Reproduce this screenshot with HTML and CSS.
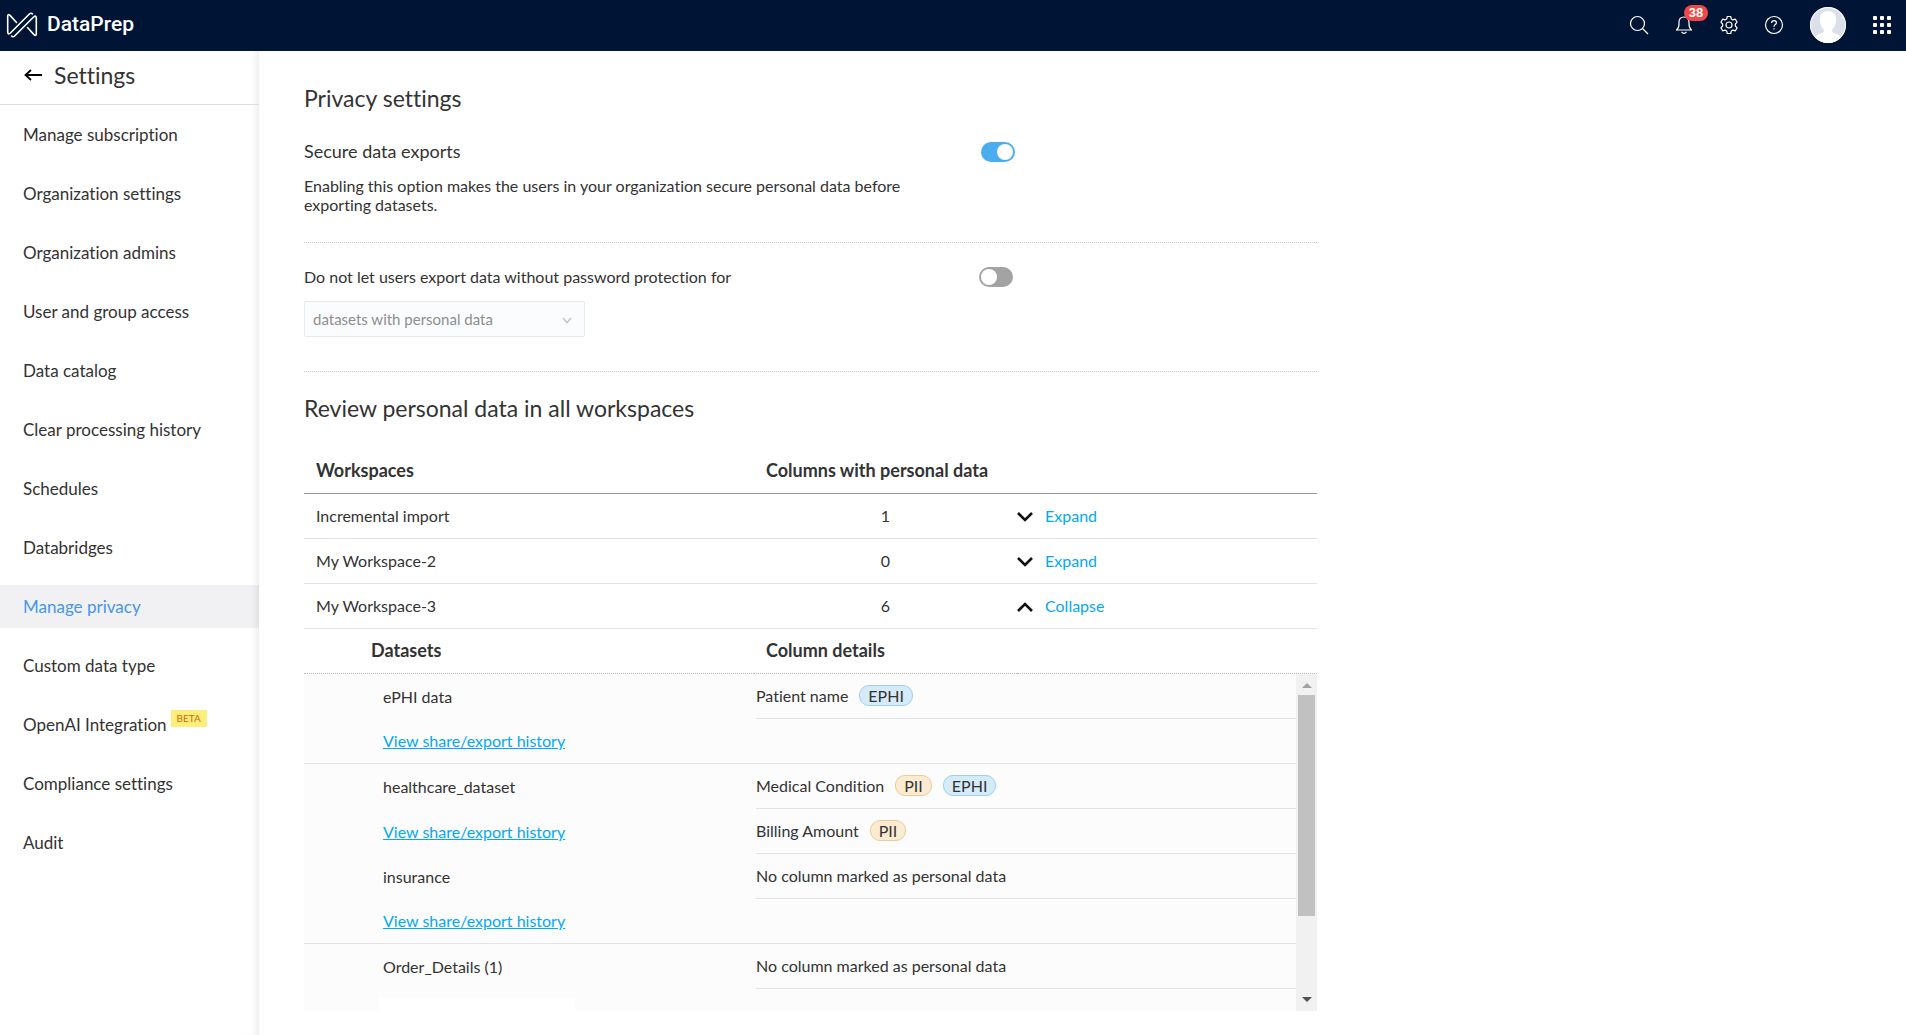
FILE: index.html
```html
<!DOCTYPE html>
<html lang="en">

<head>
	<title>DataPrep - Privacy settings</title>
	<meta charset="utf-8">
	<meta name="viewport" content="width=device-width, initial-scale=1.0">
	<link rel="stylesheet" href="styles.css">
</head>

<body>
	<header class="topbar">
		<a class="brand" href="#">
			<svg class="logo" viewBox="0 0 32 28" fill="none" stroke="#fff" stroke-width="1.6" stroke-linecap="round" stroke-linejoin="round">
				<path d="M10.5 11.5 L4 4.4 Q1.7 2.5 1.7 5.2 V21 Q1.8 24.2 4.4 22 L23.4 3 Q25.2 1.5 26.4 3"/>
				<path d="M21.5 16.5 L28 23.6 Q30.3 25.5 30.3 22.8 V7 Q30.2 3.8 27.6 6 L8.6 25 Q6.8 26.5 5.6 25"/>
			</svg>
			<span>DataPrep</span>
		</a>
		<div class="tools">
			<button class="tool" type="button" aria-label="Search">
				<svg viewBox="0 0 20 20" fill="none" stroke="#fff" stroke-width="1.2"><circle cx="8.5" cy="8.5" r="7"/><path d="M13.5 13.5 L19 19"/></svg>
			</button>
			<button class="tool" type="button" aria-label="Notifications">
				<svg viewBox="0 0 20 20" fill="none" stroke="#fff" stroke-width="1.2" stroke-linejoin="round"><path d="M2.5 15 Q5 13 5 9 V7.5 Q5 2 10 2 Q15 2 15 7.5 V9 Q15 13 17.5 15 Z"/><path d="M7.5 16.8 Q10 20 12.5 16.8"/></svg>
				<span class="count">38</span>
			</button>
			<button class="tool" type="button" aria-label="Settings">
				<svg viewBox="0 0 20 20" fill="none" stroke="#fff" stroke-width="1.2" stroke-linejoin="round"><circle cx="10" cy="10" r="3"/><path d="M8.3 1.5 H11.7 L12.3 3.9 L14 4.9 L16.4 4.2 L18.1 7.2 L16.4 9 V11 L18.1 12.8 L16.4 15.8 L14 15.1 L12.3 16.1 L11.7 18.5 H8.3 L7.7 16.1 L6 15.1 L3.6 15.8 L1.9 12.8 L3.6 11 V9 L1.9 7.2 L3.6 4.2 L6 4.9 L7.7 3.9 Z"/></svg>
			</button>
			<button class="tool" type="button" aria-label="Help">
				<svg viewBox="0 0 20 20" fill="none" stroke="#fff" stroke-width="1.2"><circle cx="10" cy="10" r="8.5"/><path d="M7.6 8 Q7.6 5.7 10 5.7 Q12.4 5.7 12.4 7.8 Q12.4 9 11 9.8 Q10 10.4 10 11.8"/><path d="M10 13.2 V14.6"/></svg>
			</button>
			<button class="avatar" type="button" aria-label="Account">
				<svg viewBox="0 0 36 36"><circle cx="18" cy="18" r="18" fill="#dce0eb"/><path d="M18 4 C23 4 26 7 26 12 C26 18 24 21 22 23 C22 26 24 26 29 28 L31 30.5 A18 18 0 0 1 5 30.5 L7 28 C12 26 14 26 14 23 C12 21 10 18 10 12 C10 7 13 4 18 4 Z" fill="#fff"/><circle cx="18" cy="18" r="17.5" fill="none" stroke="#fff"/></svg>
			</button>
			<button class="apps" type="button" aria-label="All apps">
				<svg viewBox="0 0 18 18" fill="#fff"><rect width="4" height="4" rx="1"/><rect x="7" width="4" height="4" rx="1"/><rect x="14" width="4" height="4" rx="1"/><rect y="7" width="4" height="4" rx="1"/><rect x="7" y="7" width="4" height="4" rx="1"/><rect x="14" y="7" width="4" height="4" rx="1"/><rect y="14" width="4" height="4" rx="1"/><rect x="7" y="14" width="4" height="4" rx="1"/><rect x="14" y="14" width="4" height="4" rx="1"/></svg>
			</button>
		</div>
	</header>

	<div class="page">
		<aside class="sidebar">
			<div class="sidebar-title">
				<a href="#" aria-label="Back">
					<svg viewBox="0 0 18 12" fill="none" stroke="#000" stroke-width="1.8"><path d="M18 6 H1.5 M7 1 L1.5 6 L7 11"/></svg>
				</a>
				<h2>Settings</h2>
			</div>
			<nav class="menu">
				<a href="#">Manage subscription</a>
				<a href="#">Organization settings</a>
				<a href="#">Organization admins</a>
				<a href="#">User and group access</a>
				<a href="#">Data catalog</a>
				<a href="#">Clear processing history</a>
				<a href="#">Schedules</a>
				<a href="#">Databridges</a>
				<a href="#" class="active">Manage privacy</a>
				<a href="#">Custom data type</a>
				<a href="#">OpenAI Integration<span class="beta">BETA</span></a>
				<a href="#">Compliance settings</a>
				<a href="#">Audit</a>
			</nav>
		</aside>

		<main class="content">
			<h1>Privacy settings</h1>

			<section class="setting secure">
				<div class="setting-text">
					<label class="setting-name" for="secureExports">Secure data exports</label>
					<p>Enabling this option makes the users in your organization secure personal data before exporting datasets.</p>
				</div>
				<input class="toggle" type="checkbox" id="secureExports" checked>
			</section>

			<section class="setting password">
				<div class="setting-text">
					<label for="passwordExports">Do not let users export data without password protection for</label>
					<div class="select">
						<select aria-label="Datasets to protect" disabled>
							<option>datasets with personal data</option>
						</select>
						<svg viewBox="0 0 10 7" fill="none" stroke="#c4c6cb" stroke-width="1.6"><path d="M1 1 L5 5.5 L9 1"/></svg>
					</div>
				</div>
				<input class="toggle" type="checkbox" id="passwordExports">
			</section>

			<h1>Review personal data in all workspaces</h1>

			<table class="workspaces">
				<colgroup>
					<col class="col-name">
					<col class="col-count">
					<col>
				</colgroup>
				<thead>
					<tr>
						<th>Workspaces</th>
						<th colspan="2">Columns with personal data</th>
					</tr>
				</thead>
				<tbody>
					<tr>
						<td>Incremental import</td>
						<td class="number">1</td>
						<td class="action"><button type="button"><svg viewBox="0 0 16 12"><path d="M1 3 L8 10 L15 3"/></svg>Expand</button></td>
					</tr>
					<tr>
						<td>My Workspace-2</td>
						<td class="number">0</td>
						<td class="action"><button type="button"><svg viewBox="0 0 16 12"><path d="M1 3 L8 10 L15 3"/></svg>Expand</button></td>
					</tr>
					<tr>
						<td>My Workspace-3</td>
						<td class="number">6</td>
						<td class="action"><button type="button"><svg viewBox="0 0 16 12"><path d="M1 11 L8 4 L15 11"/></svg>Collapse</button></td>
					</tr>
					<tr class="subhead">
						<th>Datasets</th>
						<th colspan="2">Column details</th>
					</tr>
					<tr class="details">
						<td colspan="3">
							<div class="scroller">
								<div class="scroll-area">
									<table class="datasets">
										<tbody class="group">
											<tr>
												<td>ePHI data</td>
												<td><span class="field">Patient name <span class="tag ephi">EPHI</span></span></td>
											</tr>
											<tr>
												<td><a href="#">View share/export history</a></td>
												<td></td>
											</tr>
										</tbody>
										<tbody>
											<tr>
												<td>healthcare_dataset</td>
												<td><span class="field">Medical Condition <span class="tag pii">PII</span><span class="tag ephi">EPHI</span></span></td>
											</tr>
											<tr>
												<td><a href="#">View share/export history</a></td>
												<td><span class="field">Billing Amount <span class="tag pii">PII</span></span></td>
											</tr>
										</tbody>
										<tbody class="group">
											<tr>
												<td>insurance</td>
												<td><span class="field">No column marked as personal data</span></td>
											</tr>
											<tr>
												<td><a href="#">View share/export history</a></td>
												<td></td>
											</tr>
										</tbody>
										<tbody>
											<tr>
												<td>Order_Details (1)</td>
												<td><span class="field">No column marked as personal data</span></td>
											</tr>
											<tr>
												<td><div class="blank"></div></td>
												<td></td>
											</tr>
										</tbody>
									</table>
								</div>
								<div class="scrollbar" aria-hidden="true">
									<svg viewBox="0 0 10 5" fill="#a3a3a3"><path d="M0 5 L5 0 L10 5 Z"/></svg>
									<div class="track"><div class="thumb"></div></div>
									<svg viewBox="0 0 10 5" fill="#505050"><path d="M0 0 L5 5 L10 0 Z"/></svg>
								</div>
							</div>
						</td>
					</tr>
				</tbody>
			</table>
		</main>
	</div>
</body>

</html>
```
FILE: styles.css
```css
*, *:before, *:after {
	box-sizing: border-box;
}

html, body {
	margin: 0;
	padding: 0;
	height: 100%;
}

body {
	display: flex;
	flex-direction: column;
	background: #fff;
	color: #333;
	font-family: Lato, "Liberation Sans", sans-serif;
	font-size: 16px;
	font-variant-ligatures: none;
	line-height: 19px;
}

h1, h2, p {
	margin: 0;
	font-weight: normal;
}

h1, h2 {
	font-size: 23px;
	line-height: 28px;
}

button {
	padding: 0;
	border: 0;
	background: none;
	color: inherit;
	font: inherit;
	cursor: pointer;
}

a {
	color: #03a9f4;
}

svg {
	display: block;
}

/* top bar */

.topbar {
	display: flex;
	align-items: center;
	justify-content: space-between;
	flex: none;
	height: 51px;
	padding: 0 15px 2px 6px;
	background: #001536;
	color: #fff;
}

.brand {
	display: flex;
	align-items: center;
	gap: 9px;
	color: #fff;
	font-family: Roboto, "Liberation Sans", sans-serif;
	font-size: 21px;
	font-weight: 500;
	text-decoration: none;
}

.logo {
	width: 32px;
	height: 28px;
}

.tools {
	display: flex;
	align-items: center;
	gap: 25px;
}

.tool {
	position: relative;
	width: 20px;
	height: 20px;
}

.tool svg {
	width: 20px;
	height: 20px;
}

.count {
	position: absolute;
	top: -10px;
	left: 10px;
	width: 24px;
	height: 16px;
	border-radius: 8px;
	background: #f04848;
	font-family: "Liberation Sans", sans-serif;
	font-size: 13px;
	font-weight: bold;
	line-height: 16px;
}

.avatar {
	margin: 0 2px 0 1px;
}

.avatar svg {
	width: 36px;
	height: 36px;
}

.apps svg {
	width: 18px;
	height: 18px;
}

.page {
	display: flex;
	flex: 1;
	min-height: 0;
}

/* sidebar */

.sidebar {
	flex: none;
	width: 259px;
	box-shadow: inset -8px 0 8px -6px rgba(0, 0, 0, .09);
}

.sidebar-title {
	display: flex;
	align-items: center;
	gap: 12px;
	height: 54px;
	padding: 0 24px 5px;
	border-bottom: 1px solid #ddd;
}

.sidebar-title svg {
	width: 18px;
	height: 12px;
}

.menu {
	display: flex;
	flex-direction: column;
	gap: 16px;
	padding-top: 8px;
}

.menu a {
	padding: 11px 23px;
	color: #333;
	font-size: 17px;
	line-height: 21px;
	text-decoration: none;
}

.menu .active {
	background: rgba(20, 20, 50, .06);
	color: #4796e8;
}

.beta {
	display: inline-block;
	margin: -4px 0 0 4px;
	padding: 0 6px;
	background: #ffef7a;
	color: #c96a10;
	font-size: 10px;
	line-height: 17px;
	vertical-align: top;
}

/* settings */

.content {
	flex: 1;
	min-width: 0;
	padding: 33px 45px 0;
}

.content > * {
	max-width: 1013px;
}

.setting {
	display: flex;
	align-items: flex-start;
	border-bottom: 1px dotted #ccc;
}

.setting-text {
	width: 675px;
}

.secure {
	padding: 30px 0 28px;
}

.secure p {
	max-width: 600px;
	margin-top: 15px;
}

.secure .toggle {
	margin-left: 2px;
}

.setting-name {
	font-size: 18px;
}

.password {
	margin-bottom: 22px;
	padding: 24px 0 34px;
}

.toggle {
	display: flex;
	flex: none;
	appearance: none;
	width: 34px;
	height: 20px;
	margin: 0;
	padding: 2px;
	border-radius: 10px;
	background: #a3a3a3;
}

.toggle:before {
	content: "";
	width: 16px;
	height: 16px;
	border-radius: 50%;
	background: #fff;
}

.toggle:checked {
	justify-content: flex-end;
	background: #4aadf0;
}

.select {
	position: relative;
	width: 281px;
	margin-top: 15px;
}

.select select {
	appearance: none;
	display: block;
	width: 100%;
	height: 36px;
	padding: 0 8px;
	border: 1px solid #e8eaef;
	border-radius: 2px;
	background: #fbfcfe;
	color: #8e8e8e;
	font: inherit;
	font-size: 15px;
	opacity: 1;
}

.select svg {
	position: absolute;
	top: 16px;
	right: 13px;
	width: 10px;
	height: 7px;
}

/* workspaces */

table {
	width: 100%;
	border-collapse: collapse;
	table-layout: fixed;
}

th {
	font-size: 18px;
	font-weight: bold;
	text-align: left;
}

th, td {
	height: 45px;
	padding: 0 12px;
}

.workspaces {
	margin-top: 26px;
}

.workspaces td {
	border-bottom: 1px solid #e3e3e3;
}

.workspaces thead th {
	border-bottom: 1px solid #999;
}

.col-name {
	width: 450px;
}

.col-count {
	width: 263px;
}

.workspaces .number {
	text-align: center;
}

.workspaces .action {
	padding: 0;
}

.action button {
	display: flex;
	align-items: center;
	gap: 12px;
	color: #03a9f4;
}

.action svg {
	width: 16px;
	height: 12px;
	fill: none;
	stroke: #111;
	stroke-width: 2.6;
}

.workspaces .subhead th {
	border-bottom: 1px dotted #bbb;
}

.subhead th:first-child {
	padding-left: 67px;
}

/* datasets */

.workspaces .details > td {
	height: auto;
	padding: 0;
	border: 0;
}

.scroller {
	display: flex;
	height: 337px;
	background: #fcfcfc;
}

.scroll-area {
	flex: 1;
	overflow: hidden;
}

.scrollbar {
	display: flex;
	flex-direction: column;
	align-items: center;
	width: 21px;
	padding: 9px 2px;
	background: #f1f1f1;
}

.scrollbar svg {
	width: 10px;
	height: 5px;
}

.track {
	flex: 1;
	width: 100%;
	padding: 7px 0;
}

.thumb {
	height: 75%;
	background: #c1c1c1;
}

.datasets {
	border-collapse: separate;
	border-spacing: 0;
}

.datasets td {
	padding: 0;
	border: 0;
}

.datasets td:first-child {
	width: 452px;
	padding-left: 79px;
}

.datasets .group tr:last-child td {
	border-bottom: 1px solid #e3e3e3;
}

.field {
	display: flex;
	align-items: center;
	gap: 11px;
	height: 45px;
	border-bottom: 1px solid #e3e3e3;
}

.tag {
	padding: 0 8px;
	border: 1px solid;
	border-radius: 10px;
}

.ephi {
	border-color: #9fd0ee;
	background: #d6ebfa;
}

.pii {
	border-color: #efcb94;
	background: #fbebd3;
}

.blank {
	width: 197px;
	height: 28px;
	margin-left: -5px;
	background: #fff;
}
```
